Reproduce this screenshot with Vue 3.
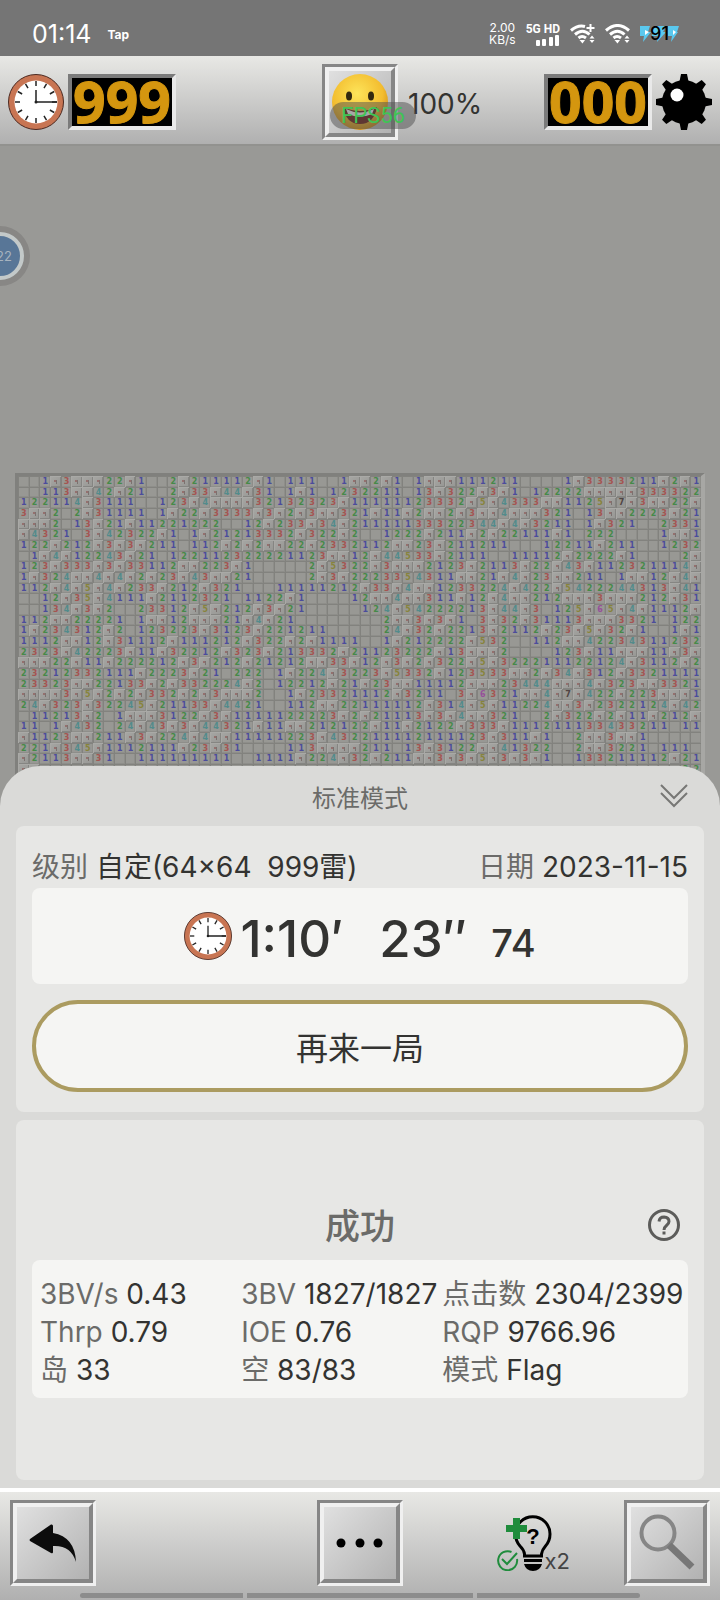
<template>
  <div class="screen">
    <header class="status-bar">
      <span class="time">01:14</span>
      <span class="carrier">Tap</span>
      <div class="status-icons">
        <div class="speed">
          <span>2.00</span>
          <span>KB/s</span>
        </div>
        <div class="signal">
          <span>5G HD</span>
          <svg width="24" height="11" viewBox="0 0 24 11" fill="#fff">
            <rect x="0" y="5" width="4" height="6" rx="1" />
            <rect x="6" y="4" width="4" height="7" rx="1" />
            <rect x="13" y="2" width="4" height="9" rx="1" />
            <rect x="19" y="0" width="4" height="11" rx="1" />
          </svg>
        </div>
        <svg v-for="n in 2" :key="n" class="wifi" width="25" height="20" viewBox="0 0 25 20" fill="none" stroke="#fff" stroke-width="3">
          <path v-if="n === 1" d="M1 6.5Q8 .5 15 2.5" />
          <path v-else d="M1 6.5Q12.500-3.500 24 6.500" />
          <path d="M5 10.500Q12.500 4 19.500 10.500" />
          <path d="M8.500 14Q12 11 16 14" />
          <path d="M9.500 16L12.500 19.500L15 16Z" fill="#fff" stroke="none" />
          <path v-if="n === 1" d="M20.500 0V8M16.500 4H24.500" stroke-width="2" />
          <path d="M19.500 14.500L22 11.500L24.500 14.500ZM19.500 16L22 19L24.500 16Z" fill="#fff" stroke="none" />
        </svg>
        <div class="battery">
          <svg width="39" height="18" viewBox="0 0 39 18" fill="#5ac8ee">
            <path d="M0 1H10L8 7H11L3 17L4 11H0ZM14 1H26L23 7H26L17 17L18 11H12ZM28 1H39L37 7H38L31 17L32 11H28Z" />
            <path d="M5 5L9 7L5 10ZM33 5L36 7L33 10Z" fill="#fff" />
          </svg>
          <span>91</span>
        </div>
      </div>
    </header>

    <div class="top-bar">
      <div class="group">
        <svg class="clock" viewBox="0 0 56 56">
          <circle cx="28" cy="28" r="27.500" fill="#c87553" stroke="#4b2a22" />
          <circle cx="28" cy="28" r="21.500" fill="#fff" />
          <path v-for="n in 12" :key="n" d="M28 7V12" stroke="#222" stroke-width="1.500" :transform="`rotate(${n * 30} 28 28)`" />
          <path d="M28 16V28H49" fill="none" stroke="#222" stroke-width="1.500" />
          <circle cx="28" cy="28" r="1.500" fill="#222" />
        </svg>
        <div class="led">999</div>
      </div>
      <div class="face-wrap">
        <button class="bevel face" aria-label="restart">
          <span class="bevel-inner">
            <svg width="58" height="58" viewBox="0 0 58 58">
              <defs>
                <radialGradient id="skin" cx="0.450" cy="0.350" r="0.650">
                  <stop offset="0" stop-color="#fde45a" />
                  <stop offset="0.700" stop-color="#f3bd2f" />
                  <stop offset="1" stop-color="#cf8d18" />
                </radialGradient>
              </defs>
              <circle cx="29" cy="29" r="28" fill="url(#skin)" />
              <ellipse cx="18" cy="23" rx="3" ry="4.500" fill="#33280f" />
              <ellipse cx="40" cy="23" rx="3" ry="4.500" fill="#33280f" />
              <path d="M12 34Q29 42 46 34Q43 51 29 51Q15 51 12 34Z" fill="#6c1f17" />
              <path d="M15 36Q29 43 43 36L41 41Q29 46 17 41Z" fill="#fff" />
            </svg>
          </span>
        </button>
        <span class="fps">FPS56</span>
      </div>
      <div class="group right">
        <span class="percent">100%</span>
        <div class="led">000</div>
        <svg class="mine" viewBox="0 0 56 56">
          <circle cx="28" cy="28" r="22" />
          <path v-for="n in 8" :key="n" d="M25 0H31L33 10H23Z" :transform="`rotate(${n * 45} 28 28)`" />
          <circle cx="21" cy="21" r="6.500" fill="#fff" />
        </svg>
      </div>
    </div>

    <main class="stage">
      <div class="board">
        <template v-for="(row, r) in board" :key="r">
          <span v-for="(cell, c) in row" :key="c" :class="['cell', cellClass(cell)]">{{ cell > 0 ? cell : '' }}</span>
        </template>
      </div>
      <div class="floater">22</div>

      <section class="sheet">
        <div class="sheet-head">
          <h2>标准模式</h2>
          <button class="collapse" aria-label="collapse">
            <svg width="28" height="24" viewBox="0 0 28 24" fill="none" stroke="#777775" stroke-width="2">
              <path d="M1 1L14 14L27 1M1 9L14 22L27 9" />
            </svg>
          </button>
        </div>

        <div class="card result">
          <div class="meta">
            <div><span class="label">级别</span> <span>自定(64×64&nbsp; 999雷)</span></div>
            <div><span class="label">日期</span> <span>2023-11-15</span></div>
          </div>
          <div class="panel timer">
            <svg class="clock small" viewBox="0 0 56 56">
              <circle cx="28" cy="28" r="27.500" fill="#c87553" stroke="#4b2a22" />
              <circle cx="28" cy="28" r="21.500" fill="#fff" />
              <path v-for="n in 12" :key="n" d="M28 7V12" stroke="#222" stroke-width="1.500" :transform="`rotate(${n * 30} 28 28)`" />
              <path d="M28 16V28H49" fill="none" stroke="#222" stroke-width="1.500" />
              <circle cx="28" cy="28" r="1.500" fill="#222" />
            </svg>
            <div class="digits">
              <span>1:10′</span>
              <span>23″</span>
              <span class="centi">74</span>
            </div>
          </div>
          <button class="again">再来一局</button>
        </div>

        <div class="card stats-card">
          <div class="outcome">
            <h3>成功</h3>
            <button class="help" aria-label="help">
              <svg width="32" height="32" viewBox="0 0 32 32" fill="none" stroke="#5c5c5a" stroke-width="3">
                <circle cx="16" cy="16" r="14.500" />
                <path d="M11 12.500Q11.500 8 16 8Q21 8.500 21 12.500Q21 14.500 18.500 16.500Q16 18.500 16 21" />
                <path d="M16 22.500V25.500" />
              </svg>
            </button>
          </div>
          <div class="panel stats">
            <div v-for="s in stats" :key="s.label" class="stat">
              <span class="label">{{ s.label }}</span> <span>{{ s.value }}</span>
            </div>
          </div>
        </div>
      </section>
    </main>

    <footer class="bottom-bar">
      <button class="bevel" aria-label="back">
        <span class="bevel-inner">
          <svg width="72" height="72" viewBox="0 0 72 72" fill="#0c0c0c">
            <path d="M13 32L34 17.500Q36 17 36 19V26Q58 30 59 55Q54 38 36 39V45Q36 47 34 46L13 34Q12 33 13 32Z" />
          </svg>
        </span>
      </button>
      <button class="bevel menu" aria-label="menu">
        <span class="bevel-inner">
          <svg width="72" height="72" viewBox="0 0 72 72">
            <circle v-for="x in [17, 36, 54]" :key="x" :cx="x" cy="36" r="4.500" />
          </svg>
        </span>
      </button>
      <button class="hint" aria-label="hint">
        <svg width="55" height="56" viewBox="0 0 55 56">
          <path d="M27.500 41V39Q27 35 23 31Q18.500 26 18.500 19A17 17 0 0 1 53 19Q53 26 48.500 31Q45 35 44.500 39V41Z" fill="none" stroke="#000" stroke-width="3" />
          <path d="M27 44H45V47H27ZM27 49H45Q43 56 36 56Q29 56 27 49Z" />
          <text x="36" y="29" class="mark">?</text>
          <path d="M16 3H23V10H30V17H23V24H16V17H9V10H16Z" fill="#1f8c3c" />
          <path d="M14.500 37A9.500 9.500 0 1 0 20 44M5 44L10 49L20 38" fill="none" stroke="#1f8c3c" stroke-width="2" />
        </svg>
        <span>x2</span>
      </button>
      <button class="bevel" aria-label="zoom">
        <span class="bevel-inner">
          <svg width="72" height="72" viewBox="0 0 72 72" fill="none" stroke="#868686">
            <circle cx="27" cy="26" r="16.500" stroke-width="4" />
            <path d="M38 38L61 60" stroke="#777" stroke-width="7" />
          </svg>
        </span>
      </button>
      <div class="nav-handles">
        <i></i>
        <i></i>
        <i></i>
      </div>
    </footer>
  </div>
</template>

<script setup>
// F = flag, . = opened empty cell
const board = [
  '..1F3FFF22F1..2F21111' + '2F1.111..1FF2F1.1FFF11' + '1211....1F3333211F2F1',
  '..113FF42F21..2F33F44' + 'F31.1F1.1232211.13F322' + 'F3F1.12222FFFFF333322',
  '122114F3111..123F4FFF' + 'F32132323F11111123332F' + '5F4333FF1125F7F3FF22F',
  '3FF2.2F31111.1F22F333' + '3F3F2F3FF321F11F2FF2F3' + 'FF4FFF321.13FF2223F21',
  'FFF2.13F21F11221222..' + '12F233F34F211111333223' + '44F4F3211.1F321..2331',
  'F4321.3F42322F1.1F212' + '13332F322F2..1222F211F' + '2F22111F1.222....1FF1',
  '122F212F3F3F211.112F2' + 'F2FF22F2332112FF23F211' + '211...12211F211..1232',
  '.1F4F12243F21.1221123' + '22221123FF12F44533F211' + '1..11112F2222F1....2F',
  '123F333F3F33112FF223F' + '1.....2F5322F3FFF2123F' + '2113F22F43F112321114F',
  '1F324FF4F4F2F23F43FF2' + '1.....2F3F2223354311FF' + '21F4F23FF211.1FF12F4F',
  '112F4F5F4F233F212F321' + '...11111212F33F4FF1233' + '224F422F5422244313F41',
  '..12F35F4111F2112321.' + '1122F1....12FF4FF311F1' + '2F4FF212FFF3FFF212F31',
  '..134F3F2..23312F5F21' + '2F3F21.....124F5422221' + '3F44F3.125F65F4F1112F',
  '112FF22221.1FF12FFF21' + 'F4F21........2FF3F3F1.' + '3F32F31113FFF3321.122',
  '1F234312F2.123223F312' + '3F221211.....24F32F221' + '3F2112F23F5F32F1..1F1',
  '1112FF12F31112F111212' + 'F322F2F1111..1F212222F' + '532..112FF42234311232',
  '2323F42223F11F32212F3' + '23F213332F21123222F13F' + 'FF2....123F11FFF11F3F',
  'FFF22F11F222212F3F212' + 'F21212FF33F12F3F2F322F' + '5F322211122124F3112F2',
  '23212332111F2223F21.2' + '22.1F224F3223F5332F123' + '533FF2F34F312F3321111',
  '23323FF22133F2F332224' + 'F2.12212F21F23FF11112F' + 'FF23444FFF4F323FF3321',
  'FFFF3F5F2F2F332F2F3FF' + 'F2..1F23321112F3211.3F' + '6321FF4F7F422F223FFF1',
  '24F323F32245F21133F44' + '21..112FF22111112F314F' + '5F11224FF3F2322124F42',
  '.11213F2.1FFF3122F3F1' + '111122223F2F21113F3F4F' + 'F321..2F322F2F11F212F',
  '11.1F432.24F43F3F4432' + '1F11FF212122F11F2122F3' + '33F111211133433211.11',
  'F1123FF211F3F224F4FF1' + '1111223F43221111211112' + '3F311F1..2FF3FF1.....',
  '221F345F1112111F23F31' + '....113FFFF211.13F3122' + 'FF41322..2FF3221.111.',
  'F2113FF31..111111111.' + '.1111F224F32F211FF3F3F' + '5F3F3F1..133211112F21',
  'FF...................' + '......................' + '...................22',
]

const stats = [
  { label: '3BV/s', value: '0.43' },
  { label: '3BV', value: '1827/1827' },
  { label: '点击数', value: '2304/2399' },
  { label: 'Thrp', value: '0.79' },
  { label: 'IOE', value: '0.76' },
  { label: 'RQP', value: '9766.96' },
  { label: '岛', value: '33' },
  { label: '空', value: '83/83' },
  { label: '模式', value: 'Flag' },
]

function cellClass(cell) {
  if (cell === 'F') return 'flag'
  return cell === '.' ? 'open' : `n${cell}`
}
</script>

<style>
body {
  margin: 0;
}
</style>

<style scoped>
.screen {
  min-height: 100vh;
  display: flex;
  flex-direction: column;
  background: #999996;
  color: #333331;
  font-family: Inter, "Noto Sans CJK SC", sans-serif;
}
button {
  padding: 0;
  border: none;
  background: none;
  color: inherit;
  font-family: inherit;
}
svg { display: block; }
h2, h3 { margin: 0; }

.status-bar {
  display: flex;
  align-items: center;
  height: 56px;
  padding: 12px 41px 0 32px;
  box-sizing: border-box;
  background: #757575;
  color: #fff;
}
.time { font-size: 25px; }
.carrier {
  margin-left: 16px;
  font-size: 12px;
  font-weight: 700;
}
.status-icons {
  display: flex;
  align-items: center;
  gap: 10px;
  margin-left: auto;
}
.speed, .signal {
  display: flex;
  flex-direction: column;
  align-items: center;
  font-size: 12px;
  line-height: 12px;
}
.signal {
  align-items: flex-end;
  font-family: Roboto, sans-serif;
  font-weight: 700;
}
.battery {
  position: relative;
  color: #000;
  font-size: 18px;
  line-height: 18px;
  font-weight: 500;
}
.battery span {
  position: absolute;
  inset: 0;
  text-align: center;
}

.top-bar {
  display: grid;
  grid-template-columns: 1fr auto 1fr;
  align-items: center;
  height: 84px;
  padding: 4px 8px 0;
  background: linear-gradient(#e8e8e5, #b0b0b0);
}
.group {
  display: flex;
  align-items: center;
  gap: 4px;
}
.clock, .mine {
  width: 56px;
  height: 56px;
}
.clock.small {
  width: 48px;
  height: 48px;
}
.led {
  width: 100px;
  height: 48px;
  border: 4px solid;
  border-color: #7b7b7b #e9e9e9 #e9e9e9 #7b7b7b;
  background: #000;
  color: #d4960f;
  font-family: "Noto Sans", sans-serif;
  font-size: 57px;
  font-weight: 700;
  line-height: 46px;
  text-align: center;
  -webkit-text-stroke: 1px #d4960f;
}
.percent {
  margin-left: 10px;
  margin-right: auto;
  padding-top: 4px;
  font-size: 28px;
}
.bevel {
  width: 86px;
  height: 86px;
  border: 3px solid;
  border-color: #868686 #f0f0f0 #f0f0f0 #868686;
}
.bevel-inner {
  display: flex;
  align-items: center;
  justify-content: center;
  height: 100%;
  box-sizing: border-box;
  border: 4px solid;
  border-color: #f0f0f0 #868686 #868686 #f0f0f0;
  background: linear-gradient(135deg, #e0e0e0, #b2b2b2);
}
.face-wrap { position: relative; }
.face {
  display: block;
  width: 76px;
  height: 76px;
}
.fps {
  position: absolute;
  left: 8px;
  top: 38px;
  width: 86px;
  border-radius: 14px;
  background: rgba(80, 80, 80, 0.5);
  color: #3fc455;
  font-family: Roboto, sans-serif;
  font-size: 22px;
  line-height: 27px;
  text-align: center;
}

.stage {
  flex: 1;
  display: grid;
  position: relative;
  border-top: 2px solid #92928f;
}
.board, .sheet { grid-area: 1 / 1; }
.board {
  align-self: start;
  display: grid;
  grid-template-columns: repeat(64, minmax(0, 1fr));
  margin: 327px 15px 0;
  border: solid;
  border-width: 3px 4px 0 3px;
  border-color: #80807d #a7a7a4 #a7a7a4 #80807d;
}
.cell {
  display: flex;
  align-items: center;
  justify-content: center;
  aspect-ratio: 1;
  box-sizing: border-box;
  border: solid #82827e;
  border-width: 1px 0 0 1px;
  box-shadow: inset -1px -1px #8e8e8a;
  background: #989894;
  font-family: "DejaVu Sans", sans-serif;
  font-size: 8px;
  font-weight: 700;
  line-height: 8px;
}
.n1 { color: #4c4c9c; }
.n2 { color: #468a49; }
.n3 { color: #a55451; }
.n4 { color: #528b8b; }
.n5 { color: #87843c; }
.n6 { color: #96509a; }
.n7 { color: #4f4442; }
.flag {
  border-color: #a9a9a6;
  box-shadow: inset -1px -1px #858582;
  background:
    linear-gradient(#94706e, #94706e) 3px 3px / 2px 2px no-repeat,
    linear-gradient(#7b716f, #7b716f) 5px 3px / 1px 4px no-repeat,
    linear-gradient(135deg, #a6a6a3, #969693);
}

.floater {
  position: absolute;
  left: -30px;
  top: 80px;
  width: 40px;
  height: 40px;
  margin: 6px;
  border: 4px solid #c3c9c9;
  border-radius: 50%;
  box-shadow: 0 0 0 6px #888785;
  background: #587697;
  color: #a7b3bf;
  font-size: 13px;
  line-height: 40px;
  text-indent: 16px;
}

.sheet {
  align-self: end;
  z-index: 1;
  padding: 0 16px 8px;
  border-radius: 40px 40px 0 0;
  background: #dadad8;
}
.sheet-head {
  display: grid;
  grid-template-columns: 28px 1fr 28px;
  align-items: center;
  height: 60px;
  padding: 0 16px;
}
.sheet-head h2 {
  grid-column: 2;
  color: #6b6b69;
  font-size: 24px;
  font-weight: 400;
  text-align: center;
}
.card {
  padding: 16px;
  border-radius: 8px;
  background: #e7e7e5;
}
.panel {
  border-radius: 8px;
  background: #f5f5f3;
}
.label { color: #6b6b69; }
.meta {
  display: flex;
  justify-content: space-between;
  height: 46px;
  font-size: 28px;
  line-height: 50px;
  white-space: nowrap;
}
.timer {
  display: flex;
  align-items: center;
  justify-content: center;
  gap: 8px;
  height: 96px;
}
.digits {
  display: flex;
  align-items: baseline;
  gap: 36px;
  padding-top: 4px;
  font-size: 51px;
  font-weight: 500;
}
.centi {
  margin-left: -12px;
  font-size: 38px;
}
.again {
  display: block;
  width: 100%;
  height: 92px;
  margin: 16px 0 4px;
  border: 4px solid #ab9b60;
  border-radius: 46px;
  background: #f5f5f3;
  font-size: 32px;
}
.stats-card {
  margin-top: 8px;
  padding: 70px 16px 82px;
}
.outcome {
  display: grid;
  grid-template-columns: 32px 1fr 32px;
  align-items: center;
  height: 70px;
  padding: 0 8px;
}
.outcome h3 {
  grid-column: 2;
  padding-bottom: 4px;
  color: #6b6b69;
  font-size: 35px;
  font-weight: 500;
  text-align: center;
}
.stats {
  display: grid;
  grid-template-columns: minmax(0, 11fr) minmax(0, 11fr) minmax(0, 13fr);
  padding: 15px 8px 9px;
}
.stat {
  height: 38px;
  font-size: 28px;
  line-height: 38px;
  white-space: nowrap;
}

.bottom-bar {
  display: grid;
  grid-template-columns: 86px 1fr 86px 1fr 86px;
  padding: 8px 10px 2px;
  border-top: 4px solid #fff;
  background: linear-gradient(#e8e8e5, #b0b0b0);
}
.menu { grid-column: 3; }
.hint {
  display: flex;
  align-items: center;
  justify-self: end;
  margin-right: 54px;
}
.hint span {
  align-self: flex-end;
  margin-left: -7px;
  padding-bottom: 12px;
  color: #444;
  font-size: 22px;
}
.mark {
  font-family: "Liberation Sans", sans-serif;
  font-size: 22px;
  font-weight: 700;
  text-anchor: middle;
}
.nav-handles {
  grid-column: 1 / -1;
  display: flex;
  gap: 4px;
  margin: 7px 70px 0;
}
.nav-handles i {
  flex: 163;
  height: 5px;
  border-radius: 3px 0 0 3px;
  background: #8c8c8c;
}
.nav-handles i:nth-child(2) {
  flex: 226;
  border-radius: 0;
}
.nav-handles i:last-child { border-radius: 0 3px 3px 0; }
</style>
